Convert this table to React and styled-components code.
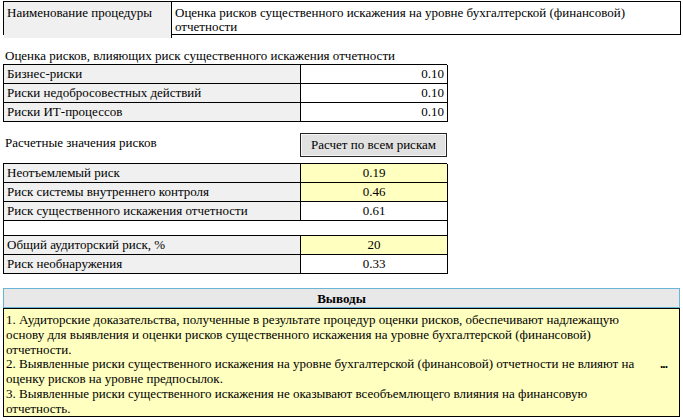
import React from "react";
import styled, { createGlobalStyle } from "styled-components";

const serif = `"Liberation Serif", "Times New Roman", serif`;

const GlobalStyle = createGlobalStyle`
  body {
    margin: 0;
    background: #fff;
    font-family: ${serif};
    font-size: 13px;
    color: #000;
  }
`;

const Page = styled.div`
  display: flex;
  flex-direction: column;
  padding: 1px 3px 0 3px;
  width: 678px;
  font-family: ${serif};
`;

const Header = styled.div`
  display: grid;
  grid-template-columns: 168px 1fr;
  border: 1px solid #000;
  height: 34px;
  box-sizing: border-box;
`;

const HeaderLabel = styled.div`
  background: #f0f0f0;
  border-right: 1px solid #000;
  padding: 4px 3px;
  line-height: 14px;
`;

const HeaderValue = styled.div`
  padding: 4px 3px;
  line-height: 14px;
`;

const SectionTitle = styled.div`
  margin-top: 13px;
  height: 16px;
  line-height: 16px;
  padding-left: 2px;
`;

const Grid = styled.div`
  display: grid;
  grid-template-columns: 297px 147px;
  width: 444px;
  border-top: 1px solid #000;
  border-left: 1px solid #000;
  box-sizing: border-box;
`;

const Cell = styled.div`
  height: 18px;
  line-height: 18px;
  padding: 0 3px;
  border-right: 1px solid #000;
  border-bottom: 1px solid #000;
  background: ${(p) => (p.$label ? "#f0f0f0" : p.$hl ? "#ffffc0" : "#fff")};
  text-align: ${(p) => p.$align || "left"};
  white-space: nowrap;
`;

const Spacer = styled.div`
  grid-column: 1 / span 2;
  height: 14px;
  border-right: 1px solid #000;
  border-bottom: 1px solid #000;
`;

const CalcRow = styled.div`
  display: flex;
  justify-content: space-between;
  align-items: center;
  width: 444px;
  margin-top: 11px;
  margin-bottom: 6px;
`;

const CalcLabel = styled.div`
  padding-left: 2px;
  margin-top: -5px;
`;

const CalcButton = styled.button`
  width: 147px;
  height: 24px;
  font-family: ${serif};
  font-size: 13px;
  color: #000;
  background: #e1e1e1;
  border: 1px solid #222;
  box-shadow: inset 0 0 0 1px #f6f6f6;
  padding: 0;
`;

const Conclusions = styled.div`
  margin-top: 14px;
  display: flex;
  flex-direction: column;
  width: 677px;
`;

const ConclHead = styled.div`
  height: 20px;
  line-height: 19px;
  box-sizing: border-box;
  border: 1px solid #6ab4d6;
  background: #e8e8e8;
  text-align: center;
  font-weight: bold;
`;

const ConclBody = styled.div`
  position: relative;
  background: #ffffc0;
  border: 1px solid #000;
  height: 109px;
  box-sizing: border-box;
  padding: 4px 40px 0 2px;
  line-height: 14.8px;
`;

const Para = styled.div``;

const More = styled.span`
  position: absolute;
  right: 12px;
  top: 49px;
  font-family: "Liberation Sans", Arial, sans-serif;
  font-weight: bold;
  font-size: 12px;
  line-height: 12px;
  letter-spacing: -1px;
`;

const risks = [
  ["Бизнес-риски", "0.10"],
  ["Риски недобросовестных действий", "0.10"],
  ["Риски ИТ-процессов", "0.10"],
];

const calc = [
  ["Неотъемлемый риск", "0.19", true],
  ["Риск системы внутреннего контроля", "0.46", true],
  ["Риск существенного искажения отчетности", "0.61", false],
];

export default function App() {
  return (
    <>
      <GlobalStyle />
      <Page>
        <Header>
          <HeaderLabel>Наименование процедуры</HeaderLabel>
          <HeaderValue>
            Оценка рисков существенного искажения на уровне бухгалтерской
            (финансовой) отчетности
          </HeaderValue>
        </Header>

        <SectionTitle>
          Оценка рисков, влияющих риск существенного искажения отчетности
        </SectionTitle>
        <Grid>
          {risks.map(([l, v]) => (
            <React.Fragment key={l}>
              <Cell $label>{l}</Cell>
              <Cell $align="right">{v}</Cell>
            </React.Fragment>
          ))}
        </Grid>

        <CalcRow>
          <CalcLabel>Расчетные значения рисков</CalcLabel>
          <CalcButton>Расчет по всем рискам</CalcButton>
        </CalcRow>

        <Grid>
          {calc.map(([l, v, hl]) => (
            <React.Fragment key={l}>
              <Cell $label>{l}</Cell>
              <Cell $align="center" $hl={hl}>
                {v}
              </Cell>
            </React.Fragment>
          ))}
          <Spacer />
          <Cell $label>Общий аудиторский риск, %</Cell>
          <Cell $align="center" $hl>
            20
          </Cell>
          <Cell $label>Риск необнаружения</Cell>
          <Cell $align="center">0.33</Cell>
        </Grid>

        <Conclusions>
          <ConclHead>Выводы</ConclHead>
          <ConclBody>
            <Para>
              1. Аудиторские доказательства, полученные в результате процедур
              оценки рисков, обеспечивают надлежащую основу для выявления и
              оценки рисков существенного искажения на уровне бухгалтерской
              (финансовой) отчетности.
            </Para>
            <Para>
              2. Выявленные риски существенного искажения на уровне
              бухгалтерской (финансовой) отчетности не влияют на оценку рисков
              на уровне предпосылок.
            </Para>
            <Para>
              3. Выявленные риски существенного искажения не оказывают
              всеобъемлющего влияния на финансовую отчетность.
            </Para>
            <More>...</More>
          </ConclBody>
        </Conclusions>
      </Page>
    </>
  );
}
